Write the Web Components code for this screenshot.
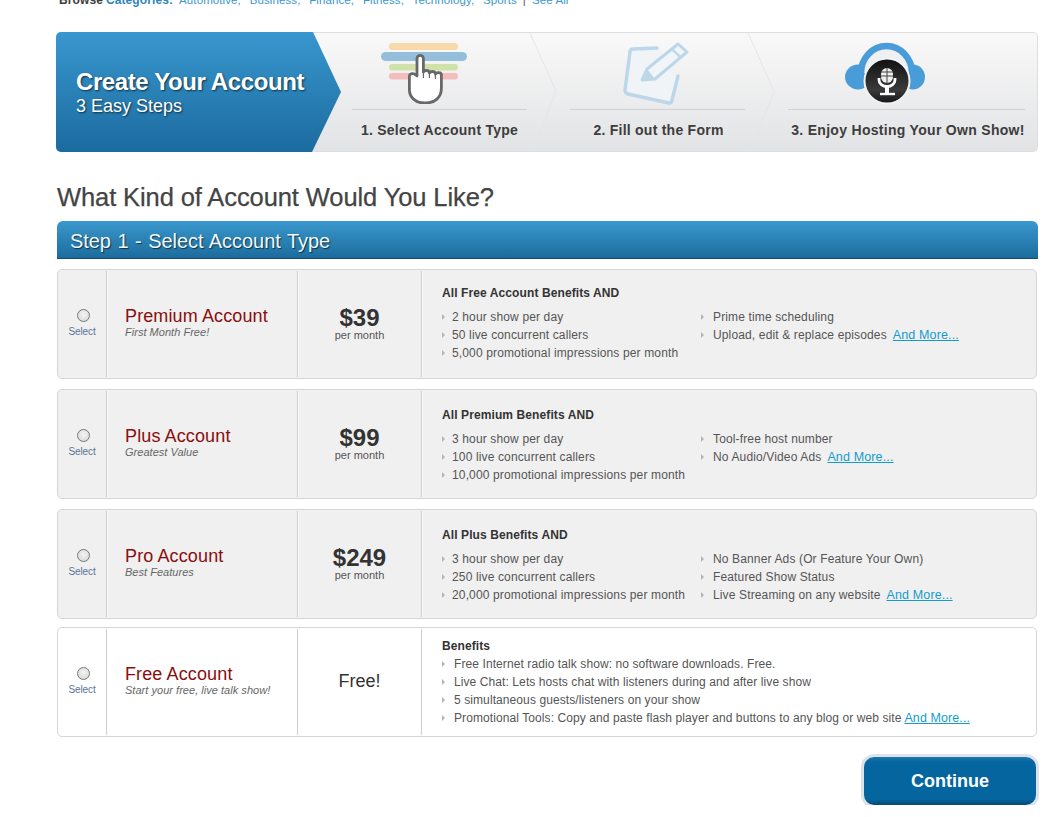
<!doctype html>
<html>
<head>
    <title>Create Your Account</title>
    <meta charset="utf-8">
    <style>
        html, body { margin: 0; background: #fff; }
        body { font-family: "Liberation Sans", Arial, sans-serif; overflow: hidden; }
    </style>
</head>
<body>
    <x-page>
        <x-browse-bar slot="top"></x-browse-bar>
        <x-steps-banner slot="top"></x-steps-banner>
        <x-heading>What Kind of Account Would You Like?</x-heading>
        <x-section-bar>Step 1 - Select Account Type</x-section-bar>

        <x-plan snug name="Premium Account" note="First Month Free!" price="$39">
            <span slot="title">All Free Account Benefits AND</span>
            <x-benefits slot="list">
                <x-benefit>2 hour show per day</x-benefit>
                <x-benefit>50 live concurrent callers</x-benefit>
                <x-benefit>5,000 promotional impressions per month</x-benefit>
                <x-benefit>Prime time scheduling</x-benefit>
                <x-benefit more>Upload, edit &amp; replace episodes</x-benefit>
            </x-benefits>
        </x-plan>
        <x-plan name="Plus Account" note="Greatest Value" price="$99">
            <span slot="title">All Premium Benefits AND</span>
            <x-benefits slot="list">
                <x-benefit>3 hour show per day</x-benefit>
                <x-benefit>100 live concurrent callers</x-benefit>
                <x-benefit>10,000 promotional impressions per month</x-benefit>
                <x-benefit>Tool-free host number</x-benefit>
                <x-benefit more>No Audio/Video Ads</x-benefit>
            </x-benefits>
        </x-plan>
        <x-plan name="Pro Account" note="Best Features" price="$249">
            <span slot="title">All Plus Benefits AND</span>
            <x-benefits slot="list">
                <x-benefit>3 hour show per day</x-benefit>
                <x-benefit>250 live concurrent callers</x-benefit>
                <x-benefit>20,000 promotional impressions per month</x-benefit>
                <x-benefit>No Banner Ads (Or Feature Your Own)</x-benefit>
                <x-benefit>Featured Show Status</x-benefit>
                <x-benefit more>Live Streaming on any website</x-benefit>
            </x-benefits>
        </x-plan>
        <x-plan free name="Free Account" note="Start your free, live talk show!" price="Free!">
            <span slot="title">Benefits</span>
            <x-benefits slot="list" single>
                <x-benefit wide>Free Internet radio talk show: no software downloads. Free.</x-benefit>
                <x-benefit wide>Live Chat: Lets hosts chat with listeners during and after live show</x-benefit>
                <x-benefit wide>5 simultaneous guests/listeners on your show</x-benefit>
                <x-benefit wide more tight>Promotional Tools: Copy and paste flash player and buttons to any blog or web site</x-benefit>
            </x-benefits>
        </x-plan>

        <x-continue>Continue</x-continue>
    </x-page>

    <template id="step-hand">
        <svg width="90" height="64" viewBox="0 0 90 64">
            <rect x="9" y="3" width="69" height="7" rx="3.5" fill="#f8d9a9"/>
            <rect x="1" y="12" width="86" height="9" rx="4.5" fill="#94bed9"/>
            <rect x="9" y="24" width="69" height="6.5" rx="3.2" fill="#d0e2a9"/>
            <rect x="9" y="33" width="69" height="6.5" rx="3.2" fill="#f3bdbd"/>
            <path d="M37 18.5a3.2 3.2 0 0 1 6.4 0V32c1-2 5-2 6 0v1c1-2 5-2 6 0v1c1-2 6-2 6 1v13c0 9-6 15-16 15h-1c-9 0-15-6-15-13V36c0-2 3-3 5-2l2.6 2z" fill="#fff" stroke="#686868" stroke-width="2.8" stroke-linejoin="round"/>
            <path d="M43.4 32v6M49.4 33v5M55.4 34v5" stroke="#686868" stroke-width="1.2" fill="none"/>
        </svg>
    </template>
    <template id="step-pencil">
        <svg width="75" height="68" viewBox="0 0 75 68">
            <path d="M37 8L13 9Q10 9 10 12L5 50Q5 53 8 54L49 63Q52 63 52 60L58 36" fill="#f1f4f7" stroke="#bcd6ea" stroke-width="3.4" stroke-linecap="round" stroke-linejoin="round"/>
            <path d="M22 40L27 29L58 4L67 12L35 39z" fill="#f2f5f8" stroke="#bcd6ea" stroke-width="3" stroke-linejoin="round"/>
            <path d="M22 40L27 29L35 39z" fill="#bcd6ea"/>
            <path d="M51.8 9L60.6 17.4" stroke="#bcd6ea" stroke-width="2.4"/>
        </svg>
    </template>
    <template id="step-mic">
        <svg width="84" height="64" viewBox="0 0 84 64">
            <defs>
                <linearGradient id="disc" x1="0" y1="0" x2="0" y2="1">
                    <stop offset="0" stop-color="#111"/>
                    <stop offset=".7" stop-color="#3a3a3a"/>
                    <stop offset="1" stop-color="#161616"/>
                </linearGradient>
            </defs>
            <ellipse cx="15" cy="36" rx="13" ry="12.5" fill="#4a9cd9"/>
            <ellipse cx="70" cy="36" rx="12" ry="12.5" fill="#4a9cd9"/>
            <path d="M18 32A25.5 27 0 0 1 69 32" fill="#eef0f2" stroke="#4a9cd9" stroke-width="6.5"/>
            <circle cx="44" cy="40" r="22.5" fill="url(#disc)" stroke="#f2f3f4" stroke-width="2"/>
            <rect x="38" y="27" width="12" height="15" rx="6" fill="#eee"/>
            <path d="M38 31h12M38 35h12M44 27v15" stroke="#444" stroke-width="1"/>
            <path d="M36 37v2a8 6.5 0 0 0 16 0v-2" fill="none" stroke="#fff" stroke-width="2.8"/>
            <path d="M44 46v6" stroke="#fff" stroke-width="4"/>
            <path d="M37 53h15" stroke="#fff" stroke-width="2.4"/>
        </svg>
    </template>

<script>
    function shadow(el, html) {
        el.attachShadow({ mode: 'open' });
        el.shadowRoot.innerHTML = html;
        return el.shadowRoot;
    }

    customElements.define('x-page', class extends HTMLElement {
        constructor() {
            super();
            shadow(this, `
                <style>
                    :host { display: block; width: 1057px; }
                    .main { display: flex; flex-direction: column; padding: 0 21px 0 57px; }
                </style>
                <slot name="top"></slot>
                <div class="main"><slot></slot></div>
            `);
        }
    });

    customElements.define('x-browse-bar', class extends HTMLElement {
        constructor() {
            super();
            shadow(this, `
                <style>
                    :host { display: block; height: 32px; overflow: hidden; color: #3b97cf; font-size: 11.5px; }
                    div { display: flex; align-items: baseline; margin: -7px 0 0 59px; line-height: 14px; white-space: nowrap; letter-spacing: .1px; }
                    b { font-size: 12px; color: #3d3d3d; margin-right: 3px; }
                    b + b { color: #2f86ba; margin-right: 6px; }
                    .links { word-spacing: 5.5px; }
                    i { font-style: normal; color: #555; padding: 0 6px; }
                </style>
                <div><b>Browse</b><b>Categories:</b><span class="links">Automotive, Business, Finance, Fitness, Technology, Sports</span><i>|</i><span>See All</span></div>
            `);
        }
    });

    customElements.define('x-step', class extends HTMLElement {
        constructor() {
            super();
            shadow(this, `
                <style>
                    :host { display: flex; flex-direction: column; flex: none; }
                    .icon { height: 77px; display: flex; justify-content: center; align-items: flex-end; box-sizing: border-box; border-bottom: 1px solid #d2d2d2; }
                    .label { text-align: center; font-size: 14px; font-weight: bold; color: #3d3d3d; padding: 11px 0 0 var(--label-pad, 0); line-height: 18px; white-space: nowrap; letter-spacing: var(--label-ls, .25px); }
                </style>
                <div class="icon"></div>
                <div class="label"><slot></slot></div>
            `);
            const tpl = document.querySelector('#' + this.getAttribute('icon'));
            const box = this.shadowRoot.querySelector('.icon');
            box.appendChild(tpl.content.cloneNode(true));
            box.style.paddingRight = (this.getAttribute('shift') || 0) + 'px';
            box.style.paddingBottom = (this.getAttribute('lift') || 0) + 'px';
        }
    });

    customElements.define('x-steps-banner', class extends HTMLElement {
        constructor() {
            super();
            const chevron = `<svg class="chev" width="43" height="118" viewBox="0 0 43 118"><path d="M3 0L29 58L6 118" fill="none" stroke="#e4e5e7" stroke-width="1"/></svg>`;
            shadow(this, `
                <style>
                    :host { display: flex; height: 120px; width: 982px; margin-left: 56px; box-sizing: border-box; border: 1px solid #dedede; border-left: 0; border-radius: 5px; background: linear-gradient(#f9f9f9, #e2e3e5); font-size: 14px; }
                    .lead { flex: none; width: 285px; height: 120px; margin-top: -1px; box-sizing: border-box; padding: 36px 0 0 20px; border-radius: 5px 0 0 5px; background: linear-gradient(#3897ce, #1b6b9f); clip-path: polygon(0 0, 257px 0, 285px 60px, 256px 120px, 0 120px); color: #fff; text-shadow: 1px 1px 2px rgba(0,0,0,.65); }
                    .lead b { display: block; font-size: 24px; line-height: 28px; letter-spacing: -.4px; }
                    .lead span { display: block; font-size: 18px; line-height: 20px; }
                    .steps { display: flex; padding-left: 11px; }
                    .chev { flex: none; }
                </style>
                <div class="lead"><b>Create Your Account</b><span>3 Easy Steps</span></div>
                <div class="steps">
                    <x-step icon="step-hand" shift="30" lift="5" style="width:175px">1. Select Account Type</x-step>
                    ${chevron}
                    <x-step icon="step-pencil" lift="1" style="width:175px;--label-pad:2px">2. Fill out the Form</x-step>
                    ${chevron}
                    <x-step icon="step-mic" shift="43" lift="4" style="width:237px;--label-pad:3px;--label-ls:.3px">3. Enjoy Hosting Your Own Show!</x-step>
                </div>
            `);
        }
    });

    customElements.define('x-heading', class extends HTMLElement {
        constructor() {
            super();
            shadow(this, `
                <style>
                    :host { display: block; margin-top: 30px; height: 39px; font-size: 25.5px; line-height: 31px; color: #444; letter-spacing: -.1px; white-space: nowrap; -webkit-text-stroke: .25px #444; }
                </style>
                <slot></slot>
            `);
        }
    });

    customElements.define('x-section-bar', class extends HTMLElement {
        constructor() {
            super();
            shadow(this, `
                <style>
                    :host { display: block; box-sizing: border-box; width: 981px; height: 38px; margin-bottom: 10px; padding-left: 13px; border-radius: 6px 6px 0 0; border-bottom: 1px solid #124e74; background: linear-gradient(#3a98cd, #1c6c9d); color: #eef7fb; font-size: 20px; line-height: 40px; letter-spacing: -.05px; word-spacing: 1px; text-shadow: 1px 1px 1px rgba(0,0,0,.6); }
                </style>
                <slot></slot>
            `);
        }
    });

    customElements.define('x-plan', class extends HTMLElement {
        constructor() {
            super();
            const name = this.getAttribute('name');
            const note = this.getAttribute('note');
            const price = this.getAttribute('price');
            const free = this.hasAttribute('free');
            shadow(this, `
                <style>
                    :host { display: grid; grid-template-columns: 48px 191px 124px 1fr; box-sizing: border-box; width: 980px; height: 110px; margin-bottom: 10px; border: 1px solid #d6d6d6; border-radius: 5px; background: #f0f0f0; }
                    :host([free]) { background: #fff; margin-top: -2px; margin-bottom: 0; }
                    .cell { margin: 1px 0; border-left: 1px solid #cfcfcf; box-shadow: inset 1px 0 0 #fafafa; }
                    :host([free]) .cell { box-shadow: none; }
                    .pick { display: flex; flex-direction: column; align-items: center; padding-top: 39px; font-size: 10px; line-height: 14px; color: #5d7396; letter-spacing: -.1px; }
                    .radio { width: 11px; height: 11px; margin-left: 3px; margin-bottom: 3px; border: 1px solid #777; border-radius: 50%; background: radial-gradient(circle at 50% 40%, #f4f4f4, #d2d2d2); }
                    .name { padding: 35px 0 0 18px; }
                    .name b { display: block; font-weight: normal; font-size: 18px; line-height: 20px; color: #8a0d0d; letter-spacing: .12px; }
                    .name i { display: block; font-size: 11px; line-height: 13px; color: #666; letter-spacing: .03px; }
                    .price { text-align: center; padding-top: 35px; color: #333; }
                    .price b { display: block; font-size: 24px; line-height: 24px; }
                    .price span { display: block; margin-top: -1px; font-size: 11px; line-height: 12px; color: #555; }
                    :host([free]) .price { padding-top: 40px; font-size: 18px; line-height: 24px; }
                    .info { padding: 15px 0 0 20px; }
                    :host([snug]) .info { padding-top: 13px; }
                    :host([free]) .info { padding-top: 8px; }
                    .title { font-size: 12px; font-weight: bold; line-height: 18px; color: #333; height: 24px; letter-spacing: .1px; }
                    :host([free]) .title { height: 18px; }
                </style>
                <div class="pick"><div class="radio"></div>Select</div>
                <div class="cell name"><b>${name}</b><i>${note}</i></div>
                <div class="cell price">${free ? price : `<b>${price}</b><span>per month</span>`}</div>
                <div class="cell info">
                    <div class="title"><slot name="title"></slot></div>
                    <slot name="list"></slot>
                </div>
            `);
        }
    });

    customElements.define('x-benefits', class extends HTMLElement {
        constructor() {
            super();
            shadow(this, `
                <style>
                    :host { display: grid; grid-auto-flow: column; grid-template-rows: repeat(3, 18px); grid-template-columns: 259px 1fr; }
                    :host([single]) { grid-template-rows: repeat(4, 18px); grid-template-columns: 1fr; }
                </style>
                <slot></slot>
            `);
        }
    });

    customElements.define('x-benefit', class extends HTMLElement {
        constructor() {
            super();
            const more = this.hasAttribute('more');
            shadow(this, `
                <style>
                    :host { display: flex; align-items: center; gap: 7px; height: 18px; font-size: 12px; color: #555; white-space: nowrap; letter-spacing: .14px; }
                    :host(:nth-child(n+4)) { gap: 9px; }
                    :host([wide]) { gap: 9px; letter-spacing: .09px; }
                    .arrow { flex: none; width: 0; height: 0; border-left: 3px solid #b4b4b4; border-top: 3px solid transparent; border-bottom: 3px solid transparent; }
                    a { margin-left: 6px; font-size: 12.5px; color: #129ccd; text-decoration: underline; }
                    :host([tight]) a { margin-left: 3px; }
                </style>
                <span class="arrow"></span>
                <span><slot></slot>${more ? '<a href="#">And More...</a>' : ''}</span>
            `);
        }
    });

    customElements.define('x-continue', class extends HTMLElement {
        constructor() {
            super();
            shadow(this, `
                <style>
                    :host { display: block; align-self: flex-end; margin: 20px 0 0; }
                    button { display: block; box-sizing: border-box; width: 172px; height: 48px; border: 0; border-radius: 10px; background: linear-gradient(#1c78ae 0, #05659f 5px, #05659f 88%, #034a76 100%); box-shadow: 0 0 0 3px #dde3e8; color: #fff; font: bold 18px "Liberation Sans", Arial, sans-serif; }
                </style>
                <button><slot></slot></button>
            `);
        }
    });
</script>
</body>
</html>
